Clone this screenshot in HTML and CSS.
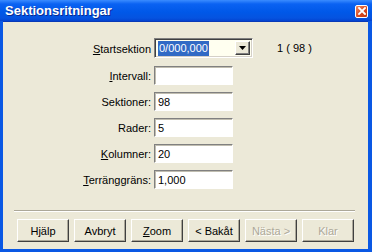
FILE: index.html
```html
<!DOCTYPE html>
<html>
<head>
<meta charset="utf-8">
<link rel="stylesheet" href="styles.css">
</head>
<body>
<div class="window">
  <div class="titlebar">
    <span class="title">Sektionsritningar</span>
    <span class="close"><svg width="8" height="8" viewBox="0 0 8 8"><path d="M1 1L7 7M7 1L1 7" stroke="#fff" stroke-width="1.8" stroke-linecap="square"/></svg></span>
  </div>
  <div class="client">
    <div class="form">
      <label class="lbl"><u>S</u>tartsektion</label>
      <div class="combo"><span class="sel">0/000,000</span><span class="drop"><svg width="7" height="4" viewBox="0 0 7 4"><path d="M0 0H7L3.5 4Z" fill="#000"/></svg></span></div>
      <span class="info">1 ( 98 )</span>

      <label class="lbl"><u>I</u>ntervall:</label>
      <div class="field"></div>
      <span></span>

      <label class="lbl">Sektioner:</label>
      <div class="field">98</div>
      <span></span>

      <label class="lbl">Rader:</label>
      <div class="field">5</div>
      <span></span>

      <label class="lbl"><u>K</u>olumner:</label>
      <div class="field">20</div>
      <span></span>

      <label class="lbl"><u>T</u>erränggräns:</label>
      <div class="field">1,000</div>
      <span></span>
    </div>
    <div class="sep"></div>
    <div class="buttons">
      <button class="btn">Hjälp</button>
      <button class="btn">Avbryt</button>
      <button class="btn"><u>Z</u>oom</button>
      <button class="btn">&lt; Bakåt</button>
      <button class="btn disabled">Nästa &gt;</button>
      <button class="btn disabled">Klar</button>
    </div>
  </div>
</div>
</body>
</html>
```

FILE: styles.css
```css
html, body {
  margin: 0;
  padding: 0;
  background: #0b5be6;
}
body {
  font-family: "Liberation Sans", Arial, sans-serif;
  font-size: 11px;
  color: #000;
}
.window {
  width: 372px;
  height: 252px;
  display: flex;
  flex-direction: column;
  background: #0a58e4;
  box-sizing: border-box;
}
.titlebar {
  height: 21px;
  flex: none;
  display: flex;
  align-items: center;
  justify-content: space-between;
  padding: 0 4px 0 5px;
  background: linear-gradient(to bottom, #3a8cff 0px, #0a62f2 4px, #0058e8 12px, #0553e0 18px, #0343d0 21px);
}
.title {
  color: #fff;
  font-weight: bold;
  font-size: 13px;
  letter-spacing: 0;
  text-shadow: 1px 1px 0 #0a2a90;
}
.close {
  width: 13px;
  height: 13px;
  box-sizing: border-box;
  border: 1px solid #fff;
  border-radius: 2px;
  background: linear-gradient(135deg, #f08a60, #d8461c 60%, #c23a12);
  display: flex;
  align-items: center;
  justify-content: center;
  margin-top: 1px;
}
.client {
  flex: 1;
  margin: 0 4px 3px 3px;
  background: #ece9d8;
  display: flex;
  flex-direction: column;
  border-top: 1px solid #0839b8;
}
.form {
  display: grid;
  grid-template-columns: 148px 99px auto;
  grid-template-rows: 21px repeat(5, 19px);
  column-gap: 3px;
  row-gap: 7px;
  margin-top: 16px;
  align-items: center;
}
.lbl {
  text-align: right;
  white-space: nowrap;
}
.combo {
  align-self: start;
  height: 20px;
  box-sizing: border-box;
  border: 1px solid;
  border-color: #808080 #fff #fff #808080;
  box-shadow: inset 1px 1px 0 #404040, inset -1px -1px 0 #d4d0c8;
  background: #fffff0;
  display: flex;
  align-items: center;
  justify-content: space-between;
  padding: 0 2px 0 3px;
}
.sel {
  background: #316ac5;
  color: #fff;
  padding: 1px 1px;
  line-height: 13px;
}
.drop {
  width: 15px;
  height: 14px;
  box-sizing: border-box;
  background: #ece9d8;
  border: 1px solid;
  border-color: #fff #404040 #404040 #fff;
  box-shadow: inset -1px -1px 0 #808080;
  display: flex;
  align-items: center;
  justify-content: center;
}
.info {
  margin-left: 21px;
  align-self: start;
  line-height: 20px;
}
.field {
  width: 79px;
  height: 19px;
  box-sizing: border-box;
  border: 1px solid;
  border-color: #808080 #fff #fff #808080;
  box-shadow: inset 1px 1px 0 #c0bdb0;
  background: #fff;
  padding: 2px 3px 0 3px;
  line-height: 14px;
}
.sep {
  margin: 21px 13px 0 11px;
  height: 0;
  border-top: 1px solid #aca899;
  border-bottom: 1px solid #fff;
}
.buttons {
  display: flex;
  gap: 5px;
  margin-top: 7px;
  padding-left: 14px;
}
.btn {
  width: 52px;
  height: 23px;
  box-sizing: border-box;
  font-family: "Liberation Sans", Arial, sans-serif;
  font-size: 11px;
  color: #000;
  background: #ece9d8;
  border: 1px solid;
  border-color: #fff #404040 #404040 #fff;
  box-shadow: inset -1px -1px 0 #aca899;
  padding: 0;
}
.btn.disabled {
  color: #aca899;
  text-shadow: 1px 1px 0 #fff;
}
```
